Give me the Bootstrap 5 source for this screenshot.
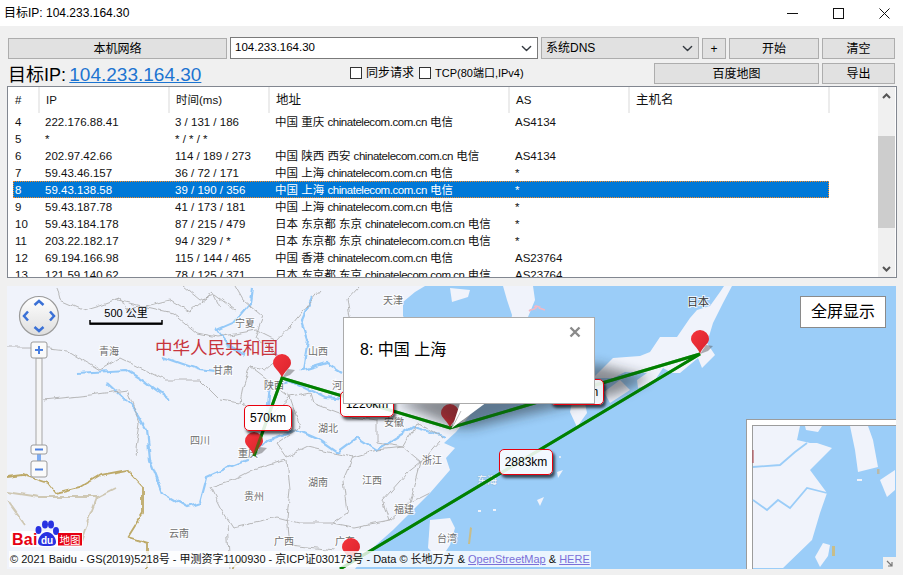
<!doctype html>
<html lang="zh-CN">
<head>
<meta charset="utf-8">
<title>目标IP: 104.233.164.30</title>
<link href="https://cdn.jsdelivr.net/npm/bootstrap@5.3.0/dist/css/bootstrap.min.css" rel="stylesheet">
<style>
html,body{height:100%;margin:0;overflow:hidden}
body{background:#f0f0f0;font-family:"Liberation Sans","Noto Sans CJK SC",sans-serif;font-size:12px;color:#000;width:903px;height:575px}
.title-strip{height:26px;background:#fff;padding-left:4px;font-size:12px}
.win-ico{width:11px;height:11px;display:block}
.win-ctl{gap:35px;padding-right:13px}
.tool-pane{padding:12px 8px 0 8px;row-gap:4px}
.row-a{height:21px;gap:3px}
.row-b{height:22px;gap:3px}
.row-a>*,.row-b>*{flex:none}
.wbtn{background:#e1e1e1;border:1px solid #adadad;border-radius:0;font-size:12px;line-height:1;padding:0;color:#000;height:21px;--bs-btn-hover-bg:#e1e1e1}
.w-local{width:219px}
.w-start{width:90px}
.w-clear{width:73px}
.w-plus{width:24px}
.w-map{width:165px}
.combo-a,.combo-b{height:22px;border-radius:0;font-size:11.5px;padding:0 0 0 4px;margin-top:-1px;background-size:11px;background-position:right 5px center;box-shadow:none;border:1px solid #7a7a7a;color:#000;font-family:"Liberation Sans",sans-serif}
.combo-a{width:308px}
.combo-b{width:158px;background-color:#e1e1e1;border-color:#adadad;font-size:12px}
.big-ip{font-size:19px;line-height:22px;width:339px;white-space:nowrap;word-spacing:-2px;margin-top:1px}
.big-lead{font-size:18px}
.big-ip a{color:#1c74d1}
.chk-wrap{gap:4px;font-size:12px;margin-right:auto;margin-top:1px}
.sq{width:12px;height:12px;border:1px solid #333;background:#fff;display:inline-block;flex:none}
.chk-gap{margin-left:1px}
.tcp-t{font-size:11px}
.list-wrap{margin:1px 6px 0 7px;height:192px;border:1px solid #828790;background:#fff;overflow:hidden}
.list-in{padding-left:5px;overflow:hidden;flex:1;min-width:0}
.tbl{table-layout:fixed;width:816px;margin:0;font-size:11.5px;--bs-table-bg:transparent;border-collapse:collapse}
.tbl th,.tbl td{padding:1px 0 0 6px;border:0;font-weight:400;white-space:nowrap;overflow:hidden;line-height:16px;height:17px;color:#111;background:transparent;box-shadow:none}
.tbl th{height:26px;border-right:2px solid #ececec;vertical-align:middle;padding:0 0 0 6px}
.tbl th.c0{padding-left:2px}
.tbl td.c0{padding-left:2px}
.tbl tr.sel-row td{background:#0078d7;color:#fff}
.tbl tr.sel-row{outline:1px dotted #ff8a1e;outline-offset:-1px}
.dom{letter-spacing:-.45px}
.cjk-h{font-size:12.5px}
.vbar{width:17px;flex:none;background:#f0f0f0;margin-right:1px}
.vbar-ar{height:17px;display:flex;align-items:center;justify-content:center}
.vbar-th{height:92px;background:#cdcdcd;margin-top:32px;margin-bottom:auto}
.map-box{position:relative;overflow:hidden;margin:8px 0 0 7px;width:889px;height:283px;background:#f0f3fb}
.map-svg{display:block;width:889px;height:283px}
.lbl{font-size:10px;fill:#6f6f6f;text-anchor:middle;paint-order:stroke;stroke:#fff;stroke-width:2px;stroke-opacity:.8}
.lbl-sea{fill:#f6f8fc;stroke:#8fb9df;stroke-width:1px}
.dist{position:absolute;background:rgba(255,255,255,.88);border:1px solid #e8000d;border-radius:5px;box-shadow:2px 3px 3px rgba(0,0,0,.65);font-size:12px;text-align:center;width:54px;height:26px;line-height:24px;color:#000}
.pop{position:absolute;left:336px;top:31px;width:252px;height:87px;background:#fff;border:1px solid #ababab;padding:21px 0 0 16px;font-size:16px;line-height:22px}
.pop-x{position:absolute;left:225px;top:8px;width:12px;height:12px}
.fullbtn{position:absolute;left:793px;top:10px;width:86px;height:32px;background:#fff;border:1px solid #8a8a8a;font-size:16px;line-height:30px;text-align:center}
.credit{position:absolute;left:2px;top:265px;height:16px;line-height:16px;padding-left:1px;padding-right:1px;background:rgba(255,255,255,.8);font-size:11px;white-space:nowrap;color:#111}
.credit a{color:#7a6fd8}
</style>
</head>
<body class="d-flex flex-column">
<div class="title-strip d-flex align-items-center justify-content-between">
  <span>目标IP: 104.233.164.30</span>
  <div class="d-flex win-ctl align-items-center">
    <svg class="win-ico" viewBox="0 0 11 11"><path d="M0 5.5H11" stroke="#111" fill="none"/></svg>
    <svg class="win-ico" viewBox="0 0 11 11"><rect x=".5" y=".5" width="10" height="10" stroke="#111" fill="none"/></svg>
    <svg class="win-ico" viewBox="0 0 11 11"><path d="M.5.5L10.5 10.5M10.5.5L.5 10.5" stroke="#111" fill="none"/></svg>
  </div>
</div>
<div class="tool-pane d-flex flex-column">
  <div class="row-a d-flex align-items-start">
    <button class="btn wbtn w-local" type="button">本机网络</button>
    <select class="form-select combo-a"><option>104.233.164.30</option></select>
    <select class="form-select combo-b"><option>系统DNS</option></select>
    <button class="btn wbtn w-plus" type="button">+</button>
    <button class="btn wbtn w-start" type="button">开始</button>
    <button class="btn wbtn w-clear" type="button">清空</button>
  </div>
  <div class="row-b d-flex align-items-start">
    <div class="big-ip"><span class="big-lead">目标IP:</span> <a href="#">104.233.164.30</a></div>
    <div class="d-flex align-items-center chk-wrap"><span class="sq"></span><span>同步请求</span><span class="sq chk-gap"></span><span class="tcp-t">TCP(80端口,IPv4)</span></div>
    <button class="btn wbtn w-map" type="button">百度地图</button>
    <button class="btn wbtn w-clear" type="button">导出</button>
  </div>
</div>
<div class="list-wrap d-flex">
  <div class="list-in">
    <table class="table tbl">
      <colgroup><col style="width:26px"><col style="width:130px"><col style="width:100px"><col style="width:240px"><col style="width:120px"><col style="width:200px"></colgroup>
      <thead><tr><th class="c0">#</th><th>IP</th><th>时间(ms)</th><th class="cjk-h">地址</th><th>AS</th><th class="cjk-h">主机名</th></tr></thead>
      <tbody>
        <tr><td class="c0">4</td><td>222.176.88.41</td><td>3 / 131 / 186</td><td>中国 重庆 <span class="dom">chinatelecom.com.cn</span> 电信</td><td>AS4134</td><td></td></tr>
        <tr><td class="c0">5</td><td>*</td><td>* / * / *</td><td></td><td></td><td></td></tr>
        <tr><td class="c0">6</td><td>202.97.42.66</td><td>114 / 189 / 273</td><td>中国 陕西 西安 <span class="dom">chinatelecom.com.cn</span> 电信</td><td>AS4134</td><td></td></tr>
        <tr><td class="c0">7</td><td>59.43.46.157</td><td>36 / 72 / 171</td><td>中国 上海 <span class="dom">chinatelecom.com.cn</span> 电信</td><td>*</td><td></td></tr>
        <tr class="sel-row"><td class="c0">8</td><td>59.43.138.58</td><td>39 / 190 / 356</td><td>中国 上海 <span class="dom">chinatelecom.com.cn</span> 电信</td><td>*</td><td></td></tr>
        <tr><td class="c0">9</td><td>59.43.187.78</td><td>41 / 173 / 181</td><td>中国 上海 <span class="dom">chinatelecom.com.cn</span> 电信</td><td>*</td><td></td></tr>
        <tr><td class="c0">10</td><td>59.43.184.178</td><td>87 / 215 / 479</td><td>日本 东京都 东京 <span class="dom">chinatelecom.com.cn</span> 电信</td><td>*</td><td></td></tr>
        <tr><td class="c0">11</td><td>203.22.182.17</td><td>94 / 329 / *</td><td>日本 东京都 东京 <span class="dom">chinatelecom.com.cn</span> 电信</td><td>*</td><td></td></tr>
        <tr><td class="c0">12</td><td>69.194.166.98</td><td>115 / 144 / 465</td><td>中国 香港 <span class="dom">chinatelecom.com.cn</span> 电信</td><td>AS23764</td><td></td></tr>
        <tr><td class="c0">13</td><td>121.59.140.62</td><td>78 / 125 / 371</td><td>日本 东京都 东京 <span class="dom">chinatelecom.com.cn</span> 电信</td><td>AS23764</td><td></td></tr>
      </tbody>
    </table>
  </div>
  <div class="vbar d-flex flex-column">
    <div class="vbar-ar"><svg width="9" height="6" viewBox="0 0 9 6"><path d="M1 5L4.500 1.500L8 5" fill="none" stroke="#555" stroke-width="2"/></svg></div>
    <div class="vbar-th"></div>
    <div class="vbar-ar"><svg width="9" height="6" viewBox="0 0 9 6"><path d="M1 1L4.500 4.500L8 1" fill="none" stroke="#555" stroke-width="2"/></svg></div>
  </div>
</div>
<div class="map-box">
<svg class="map-svg" viewBox="7 286 889 283" xmlns="http://www.w3.org/2000/svg">
  <defs>
    <filter id="wig" x="-5%" y="-5%" width="110%" height="110%" color-interpolation-filters="sRGB"><feTurbulence type="fractalNoise" baseFrequency=".09" numOctaves="2" seed="4" result="n"/><feDisplacementMap in="SourceGraphic" in2="n" scale="6" xChannelSelector="R" yChannelSelector="G"/></filter>
    <filter id="blr" x="-30%" y="-50%" width="160%" height="200%"><feGaussianBlur stdDeviation="6"/></filter>
    <linearGradient id="nv" x1="0" y1="0" x2="0" y2="1"><stop offset="0" stop-color="#fff"/><stop offset="1" stop-color="#dedede"/></linearGradient>
    <linearGradient id="pn" x1="0" y1="0" x2="1" y2="1"><stop offset="0" stop-color="#f4343c"/><stop offset="1" stop-color="#d9232c"/></linearGradient>
    <symbol id="pin" overflow="visible"><path d="M0 0L8 -3 13 -8 6 -9Z" fill="#555" opacity=".45"/><path d="M0 0C-2 -7 -9 -10 -9 -15A9 9 0 1 1 9 -15C9 -10 2 -7 0 0Z" fill="url(#pn)"/></symbol>
  </defs>
  <!-- sea -->
  <path d="M425 286H896V569H355L367 553 393 530 413 510 430 493 450 470 446 458 455 448 444 443 456 432 470 415 460 380 420 340 403 316 403 302 415 292Z" fill="#9bcdf8"/>
  <!-- islands and land -->
  <g fill="#f0f3fb">
    <path d="M503 286H533L535 300 528 317 530 345 520 365 505 365 510 330 512 315 507 300Z"/>
    <path d="M732 286L723 303 713 323 707 343 715 355 702 368 698 358 680 373 672 373 663 368 653 383 638 388 637 380 647 373 625 372 613 378 593 378 613 358 640 356 650 352 660 337 677 337 690 318 697 310 710 306 720 292 724 286Z"/>
    <path d="M610 403L630 390 620 380 604 392Z"/>
    <path d="M570 412L577 427 587 413 585 403 572 403Z"/>
    <path d="M430 520L450 518 455 528 450 545 440 560 428 548Z"/>
    <path d="M450 288L470 290 468 297 452 302Z"/>
    <circle cx="560" cy="457" r="1"/><path d="M557 472L563 470 558 478Z"/><path d="M537 500L544 497 540 506Z"/>
    <rect x="478" y="510" width="3" height="2"/><rect x="493" y="509" width="3" height="2"/>
  </g>
  <path d="M470 527L472 528 470 544 468 544Z" fill="#c8bd8a"/>
  <!-- rivers -->
  <g fill="none" stroke="#94c9f8" stroke-width="2.200" filter="url(#wig)">
    <path d="M107 383L133 407 147 430 150 460 163 493 187 507 200 503 207 477 227 468 247 460 267 440 297 430 320 440 337 452 357 437 377 450 413 427 447 437"/>
    <path d="M252 287L250 303 233 323 217 330 230 347 245 355"/>
    <path d="M312 297L302 320 308 340 303 370 327 363 343 373"/>
    <path d="M163 357L200 370 215 372"/>
    <path d="M77 373L127 370 143 380 170 400"/>
    <path d="M267 415L270 385 290 380 325 398 347 400"/>
  </g>
  <!-- boundaries -->
  <g fill="none" stroke="#b0b0b0" stroke-width=".9" filter="url(#wig)">
    <path d="M57 288L60 300 83 310 100 305 120 298 125 310 150 305 170 300 190 312 213 293 220 307"/>
    <path d="M117 300L173 313 197 333 217 337 257 330 277 340 293 323 320 290"/>
    <path d="M7 347L40 347 67 350 100 370 120 358 165 380 200 380 220 400 240 403 243 387 250 367 265 370 280 357 255 337 263 317 243 300 235 286"/>
    <path d="M358 288L347 300 350 317"/>
    <path d="M290 397L310 393 313 403 350 417 377 420 377 443 403 447 417 423 443 437"/>
    <path d="M43 400L90 395 127 390 140 423 135 455"/>
    <path d="M290 397L300 427 277 443 287 457 307 447 333 453 353 457 343 480 347 513 333 523 300 523 277 517 233 527 220 507 210 487 233 480 253 470 287 460 290 490 287 517"/>
    <path d="M353 457L377 450 403 447 421 462 407 473 383 500 390 520 353 527 333 523"/>
    <path d="M410 503L430 493M390 520L410 503 421 462 440 440"/>
    <path d="M227 523L230 569M287 517L290 545 335 550"/>
    <path d="M183 286L200 300 215 295 235 310"/>
    <path d="M243 403L265 420 290 397M250 367L290 397"/>
  </g>
  <!-- national borders -->
  <g fill="none" stroke-width="1.800" filter="url(#wig)">
    <path d="M7 477L23 475 47 483 55 493 80 487 100 475 127 470 143 487 143 513 128 537 147 543 147 569" stroke="#bda968"/>
    <path d="M7 492L40 497 60 497 97 497 117 487M97 497L87 523 80 545M7 500L25 525" stroke="#cfc8b4"/>
    <path d="M530 311L536 307 545 310" stroke="#f2b7c4"/>
    <path d="M232 569L245 558" stroke="#bda968"/>
  </g>
  <!-- place labels -->
  <text class="lbl" x="393" y="304">天津</text><text class="lbl" x="245" y="327">宁夏</text>
  <text class="lbl" x="109" y="355">青海</text><text class="lbl" x="318" y="355">山西</text>
  <text class="lbl" x="223" y="374">甘肃</text><text class="lbl" x="274" y="389">陕西</text>
  <text class="lbl" x="342" y="389">河南</text><text class="lbl" x="200" y="444">四川</text>
  <text class="lbl" x="328" y="432">湖北</text><text class="lbl" x="394" y="426">安徽</text>
  <text class="lbl" x="248" y="457">重庆</text><text class="lbl" x="432" y="464">浙江</text>
  <text class="lbl" x="254" y="500">贵州</text><text class="lbl" x="318" y="486">湖南</text>
  <text class="lbl" x="372" y="484">江西</text><text class="lbl" x="404" y="513">福建</text>
  <text class="lbl" x="179" y="537">云南</text><text class="lbl" x="284" y="545">广西</text>
  <text class="lbl" x="345" y="545">广东</text><text class="lbl" x="447" y="542">台湾</text>
  <text class="lbl lbl-sea" x="487" y="484">东海</text>
  <text class="lbl" x="698" y="306" style="font-size:11px;fill:#333">日本</text>
  <text x="216.500" y="354" text-anchor="middle" style="font-size:17.600px;fill:#c8343c">中华人民共和国</text>
  <!-- scale -->
  <text x="126" y="317" text-anchor="middle" style="font-size:11px;fill:#000">500 公里</text>
  <path d="M90 320V324H162V320" fill="none" stroke="#000" stroke-width="1.500"/><path d="M90 323.500H162" stroke="#000" stroke-width="2"/>
  <!-- route -->
  <path d="M254 456L282 378 450 428 700 354 340 569" fill="none" stroke="#008000" stroke-width="3"/>
  <use href="#pin" x="254" y="456"/><use href="#pin" x="282" y="378"/><use href="#pin" x="700" y="354"/><use href="#pin" x="351" y="562"/>
  <use href="#pin" x="450" y="428"/>
  <!-- popup shadow -->
  <path d="M396 402L596 364 650 378 618 394 512 418 472 428 456 428Z" fill="#22262c" opacity=".5" filter="url(#blr)"/>
  <path d="M254 456L282 378 450 428 700 354 340 569" fill="none" stroke="#008000" stroke-width="3" opacity=".55"/>
  <!-- navigator -->
  <circle cx="39" cy="316" r="19.500" fill="url(#nv)" stroke="#9a9a9a" stroke-width="1.200"/>
  <g fill="none" stroke="#3b71d6" stroke-width="2.500">
    <path d="M34.500 305L39 301 43.500 305M34.500 327L39 331 43.500 327M28 311.500L24 316 28 320.500M50 311.500L54 316 50 320.500"/>
  </g>
  <rect x="36" y="358" width="6" height="88" fill="#f6f6f6" stroke="#a5a5a5"/>
  <rect x="37" y="453" width="4" height="9" fill="#7fadf2"/>
  <g fill="#fafafa" stroke="#9b9b9b">
    <rect x="31" y="342" width="16" height="16" rx="2"/><rect x="31" y="445" width="16" height="9" rx="2"/><rect x="31" y="461" width="16" height="16" rx="2"/>
  </g>
  <path d="M35 350H43M39 346V354" stroke="#4a7fe0" stroke-width="2"/><path d="M35 449.500H43M35 469.500H43" stroke="#4a7fe0" stroke-width="2"/>
  <!-- baidu logo -->
  <rect x="10" y="531" width="73" height="16" rx="3" fill="#fff" opacity=".85"/>
  <text x="12" y="545" style="font-size:16px;font-weight:700;fill:#e60012;letter-spacing:.3px;font-family:'Liberation Sans',sans-serif">Bai</text>
  <g fill="#2932e1"><path d="M47 532C52 532 56 538 56 542S52 546 47 546 38 546 38 542 42 532 47 532Z"/><ellipse cx="38.500" cy="530" rx="3" ry="4"/><ellipse cx="45" cy="524.500" rx="3" ry="4"/><ellipse cx="51" cy="524.500" rx="3" ry="4"/><ellipse cx="56" cy="531" rx="3" ry="4"/></g>
  <text x="47" y="544" text-anchor="middle" style="font-size:10px;font-weight:700;fill:#fff;font-family:'Liberation Sans',sans-serif">du</text>
  <rect x="58" y="533" width="24" height="12.500" fill="#e60012"/>
  <text x="70" y="543.500" text-anchor="middle" style="font-size:10.500px;fill:#fff">地图</text>
  <!-- overview map -->
  <rect x="746.500" y="419.500" width="150" height="150" fill="#fff" stroke="#9c9c9c"/>
  <rect x="752.500" y="425.500" width="144" height="144" fill="#9bcdf8" stroke="#9c9c9c"/>
  <g fill="#f0f3fb">
    <path d="M753 426H800L797 440 810 443 817 443 832 448 810 470 827 493 820 513 812 540 783 568H753Z"/>
    <path d="M805 426H822L818 432 806 430Z"/>
    <path d="M850 426H868L873 440 878 467 858 472 855 450Z"/>
    <path d="M895 470L880 480 887 497 895 490Z"/>
    <path d="M823 543L830 545 828 556 820 567 815 557Z"/>
    <rect x="857" y="479" width="5" height="2"/>
  </g>
  <g fill="none" stroke="#9bcdf8" stroke-width="1.800">
    <path d="M753 467L780 465 795 452 807 443"/><path d="M753 500L767 510 778 500 790 508 807 488 827 493"/>
  </g>
  <path d="M753 450V463" stroke="#b04048" stroke-width="1"/>
  <rect x="832" y="546" width="3" height="10" fill="#c8bd8a"/>
  <rect x="877" y="469" width="2.500" height="5" fill="#b9b9a8"/>
  <rect x="883" y="557" width="13" height="12" fill="#f0f0f0"/>
  <path d="M887 561L892 566M892 562V566H888" fill="none" stroke="#777" stroke-width="1.200"/>
</svg>
<div class="dist" style="left:237px;top:119px;width:48px">570km</div>
<div class="dist" style="left:333px;top:105px">1220km</div>
<div class="dist" style="left:543px;top:93px">1764km</div>
<div class="dist" style="left:492px;top:163px">2883km</div>
<svg class="position-absolute top-0 start-0" width="889" height="283" viewBox="7 286 889 283"><path d="M460 403.500L452 428 485 403.500Z" fill="#fff"/><path d="M452 428L461 411" stroke="#bbb" fill="none"/></svg>
<div class="pop">8: 中国 上海
  <svg class="pop-x" viewBox="0 0 12 12"><path d="M1.500 1.500L10.500 10.500M10.500 1.500L1.500 10.500" stroke="#8a8a8a" stroke-width="2.400" fill="none"/></svg>
</div>
<div class="fullbtn">全屏显示</div>
<div class="credit">© 2021 Baidu - GS(2019)5218号 - 甲测资字1100930 - 京ICP证030173号 - Data © 长地万方 &amp; <a href="#">OpenStreetMap</a> &amp; <a href="#">HERE</a></div>
</div>
<script src="https://cdn.jsdelivr.net/npm/bootstrap@5.3.0/dist/js/bootstrap.bundle.min.js"></script>
</body>
</html>
